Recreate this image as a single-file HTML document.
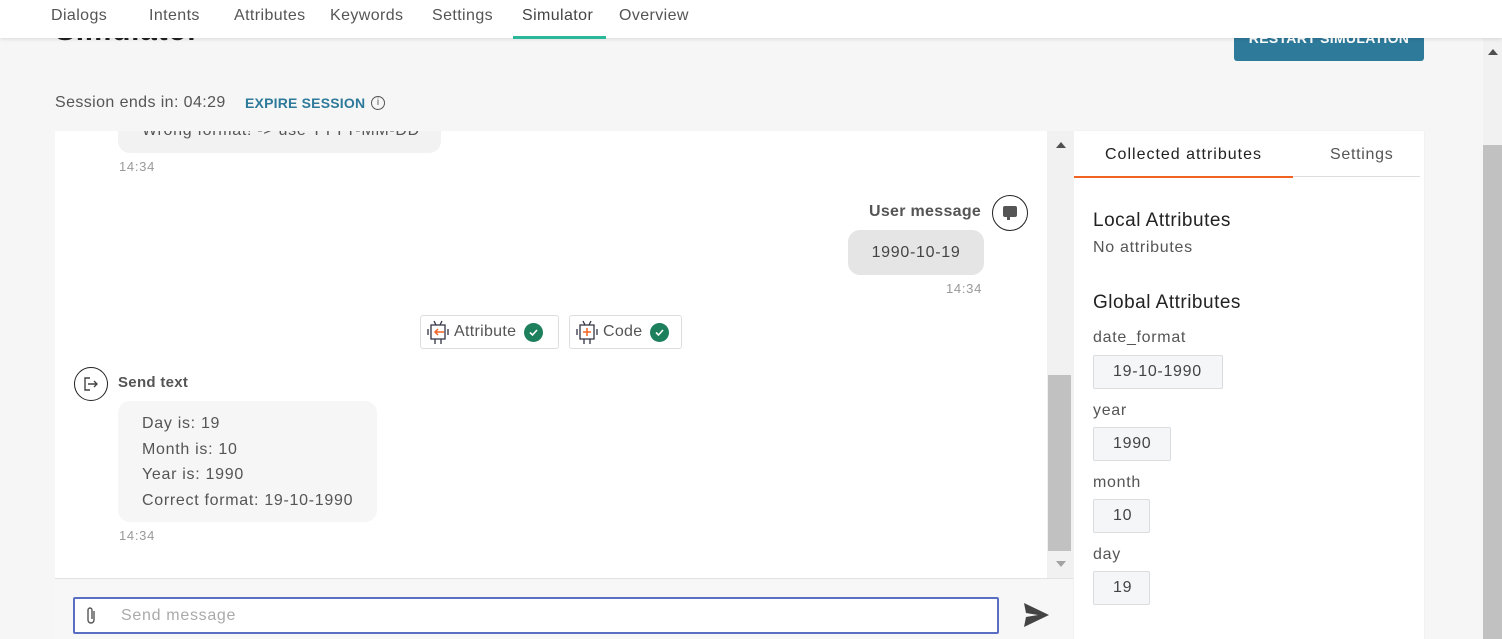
<!DOCTYPE html>
<html><head><meta charset="utf-8"><style>
*{box-sizing:border-box;margin:0;padding:0}
body{width:1502px;height:639px;overflow:hidden;background:#f6f6f6;font-family:"Liberation Sans",sans-serif;color:#444;position:relative;letter-spacing:0.7px}
.abs{position:absolute}
.nav{left:0;top:0;width:1502px;height:38px;background:#fff;box-shadow:0 1px 4px rgba(0,0,0,.12);z-index:5}
.nav span{position:absolute;top:7px;font-size:16px;color:#555;letter-spacing:0.4px}
.card{background:#fff}
.ts{font-size:13px;color:#999}
.chip{border:1px solid #ddd;border-radius:3px;height:34px;background:#fff;font-size:16px;color:#555;display:flex;align-items:center;letter-spacing:0.3px}
.chk{width:19px;height:19px;border-radius:50%;background:#1e7f5c;display:inline-block;position:relative;margin-left:8px}
.attrbox{border:1px solid #d9dde0;background:#f5f6f7;height:34px;font-size:16px;color:#444;display:flex;align-items:center;padding:0 19px;border-radius:2px}
.lbl{font-size:16px;color:#555}
</style></head><body>
<div class="abs" style="left:55px;top:14px;font-size:30px;font-weight:bold;color:#222">Simulator</div>
<div class="abs" style="left:1234px;top:20px;width:190px;height:41px;background:#2e7a9a;border-radius:3px;color:#fff;font-weight:bold;font-size:14px;text-align:center;padding-top:10px;letter-spacing:0.3px">RESTART SIMULATION</div>
<div class="abs nav">
<span style="left:51px">Dialogs</span><span style="left:149px">Intents</span><span style="left:234px">Attributes</span><span style="left:330px">Keywords</span><span style="left:432px">Settings</span><span style="left:522px;color:#444">Simulator</span><span style="left:619px">Overview</span>
<div class="abs" style="left:513px;top:36px;width:93px;height:3px;background:#2bb89a"></div>
</div>
<div class="abs" style="left:55px;top:94px;font-size:16px;color:#555;letter-spacing:0.4px">Session ends in: 04:29</div>
<div class="abs" style="left:245px;top:95px;font-size:14px;font-weight:bold;color:#2e7a9a;letter-spacing:0.2px">EXPIRE SESSION</div>
<div class="abs" style="left:371px;top:96px;width:14px;height:14px;border:1px solid #555;border-radius:50%;font-size:10px;text-align:center;line-height:12px;color:#555;letter-spacing:0">i</div>

<div class="abs card" style="left:55px;top:131px;width:1018px;height:508px;overflow:hidden">
 <div class="abs" style="left:63px;top:-20px;width:323px;height:42px;background:#f2f2f2;border-radius:12px"></div>
 <div class="abs" style="left:87px;top:-9px;font-size:16px;color:#555">Wrong format! -&gt; use YYYY-MM-DD</div>
 <div class="abs ts" style="left:64px;top:28px">14:34</div>
 <div class="abs" style="left:814px;top:72px;font-size:16px;font-weight:bold;color:#555;letter-spacing:0.3px">User message</div>
 <div class="abs" style="left:937px;top:64px;width:36px;height:36px;border:1.5px solid #222;border-radius:50%"><div class="abs" style="left:10px;top:10px;width:14px;height:11px;background:#555;border-radius:2px"></div><div class="abs" style="left:14px;top:20px;width:3px;height:4px;background:#555"></div></div>
 <div class="abs" style="left:793px;top:99px;width:136px;height:45px;background:#e5e5e5;border-radius:12px;font-size:16px;color:#444;text-align:center;line-height:45px">1990-10-19</div>
 <div class="abs ts" style="left:891px;top:150px">14:34</div>
 <div class="abs chip" style="left:365px;top:184px;width:139px;padding-left:5px">
  <svg width="24" height="28" viewBox="0 0 24 28"><path d="M8 3l2 4M16 3l-2 4M5 7h14v14H5zM2 11v6M22 11v6M9 21v5M15 21v5" stroke="#334" stroke-width="1.3" fill="none"/><path d="M18 14H9M12 11l-3 3 3 3" stroke="#f26322" stroke-width="1.5" fill="none"/></svg>
  <span style="margin-left:4px">Attribute</span><span class="chk"><svg width="19" height="19" class="abs" style="left:0;top:0"><path d="M6 9.5l2.5 2.5 4.5-5" stroke="#fff" stroke-width="1.6" fill="none"/></svg></span></div>
 <div class="abs chip" style="left:514px;top:184px;width:113px;padding-left:5px">
  <svg width="24" height="28" viewBox="0 0 24 28"><path d="M8 3l2 4M16 3l-2 4M5 7h14v14H5zM2 11v6M22 11v6M9 21v5M15 21v5" stroke="#334" stroke-width="1.3" fill="none"/><path d="M12 10v8M8 14h8" stroke="#f26322" stroke-width="1.5"/></svg>
  <span style="margin-left:4px">Code</span><span class="chk"><svg width="19" height="19" class="abs" style="left:0;top:0"><path d="M6 9.5l2.5 2.5 4.5-5" stroke="#fff" stroke-width="1.6" fill="none"/></svg></span></div>
 <div class="abs" style="left:19px;top:236px;width:34px;height:34px;border:1.5px solid #222;border-radius:50%"><svg width="34" height="34" class="abs" style="left:-1px;top:-1px"><path d="M16 11h-5v12h5M14 17h9M20 14l3 3-3 3" stroke="#444" stroke-width="1.4" fill="none"/></svg></div>
 <div class="abs" style="left:63px;top:243px;font-size:15px;font-weight:bold;color:#555;letter-spacing:0.3px">Send text</div>
 <div class="abs" style="left:63px;top:270px;width:259px;height:121px;background:#f6f6f6;border-radius:12px;padding:10px 0 0 24px;font-size:16px;line-height:25.7px;color:#555">Day is: 19<br>Month is: 10<br>Year is: 1990<br>Correct format: 19-10-1990</div>
 <div class="abs ts" style="left:64px;top:397px">14:34</div>
 <div class="abs" style="left:992px;top:0;width:26px;height:447px;background:#f1f1f1"></div>
 <div class="abs" style="left:1001px;top:11px;width:0;height:0;border-left:5px solid transparent;border-right:5px solid transparent;border-bottom:6px solid #505050"></div>
 <div class="abs" style="left:993px;top:244px;width:23px;height:176px;background:#c1c1c1"></div>
 <div class="abs" style="left:1001px;top:430px;width:0;height:0;border-left:5px solid transparent;border-right:5px solid transparent;border-top:6px solid #a3a3a3"></div>
 <div class="abs" style="left:0;top:447px;width:1018px;height:61px;background:#f7f7f7;border-top:1px solid #e2e2e2"></div>
 <div class="abs" style="left:18px;top:466px;width:926px;height:37px;background:#fff;border:2px solid #5a6fc4;border-radius:2px"></div>
 <svg class="abs" style="left:30px;top:475px" width="14" height="20"><path d="M9 5v9a3 3 0 0 1-6 0V4a2 2 0 0 1 4 0v9" stroke="#555" stroke-width="1.4" fill="none"/></svg>
 <div class="abs" style="left:66px;top:476px;font-size:16px;color:#aaa">Send message</div>
 <svg class="abs" style="left:967px;top:471px" width="28" height="26"><path d="M2 1l25 12L2 25l2-10 12-2-12-2z" fill="#444"/></svg>
</div>

<div class="abs card" style="left:1074px;top:131px;width:350px;height:508px;box-shadow:0 0 2px rgba(0,0,0,.06)">
 <div class="abs" style="left:31px;top:15px;font-size:16px;color:#222;letter-spacing:1px">Collected attributes</div>
 <div class="abs" style="left:256px;top:15px;font-size:16px;color:#555">Settings</div>
 <div class="abs" style="left:0;top:45px;width:346px;height:1px;background:#ddd"></div>
 <div class="abs" style="left:0;top:45px;width:219px;height:2px;background:#f26322"></div>
 <div class="abs" style="left:19px;top:79px;font-size:19px;color:#222;letter-spacing:0.5px">Local Attributes</div>
 <div class="abs lbl" style="left:19px;top:108px">No attributes</div>
 <div class="abs" style="left:19px;top:161px;font-size:19px;color:#222;letter-spacing:0.5px">Global Attributes</div>
 <div class="abs lbl" style="left:19px;top:198px">date_format</div>
 <div class="abs attrbox" style="left:19px;top:224px;width:130px">19-10-1990</div>
 <div class="abs lbl" style="left:19px;top:271px">year</div>
 <div class="abs attrbox" style="left:19px;top:296px;width:78px">1990</div>
 <div class="abs lbl" style="left:19px;top:343px">month</div>
 <div class="abs attrbox" style="left:19px;top:368px;width:57px">10</div>
 <div class="abs lbl" style="left:19px;top:415px">day</div>
 <div class="abs attrbox" style="left:19px;top:440px;width:57px">19</div>
</div>

<div class="abs" style="left:1483px;top:38px;width:19px;height:601px;background:#f1f1f1"></div>
<div class="abs" style="left:1488px;top:49px;width:0;height:0;border-left:5px solid transparent;border-right:5px solid transparent;border-bottom:6px solid #505050"></div>
<div class="abs" style="left:1483px;top:145px;width:19px;height:494px;background:#c1c1c1"></div>
</body></html>
